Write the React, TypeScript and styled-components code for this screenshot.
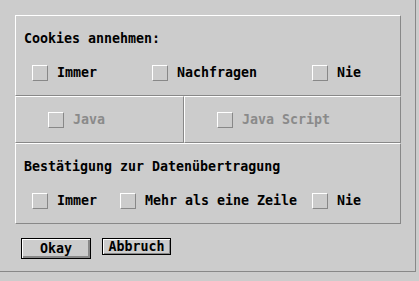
import React from "react";
import styled, { createGlobalStyle } from "styled-components";

const Global = createGlobalStyle`
  html, body { margin: 0; padding: 0; background: #cccccc; }
  body {
    font-family: "DejaVu Sans Mono", "Liberation Mono", monospace;
    font-weight: bold;
    font-size: 13.3px;
    line-height: 16px;
    color: #000;
  }
  * { box-sizing: border-box; }
`;

const Window = styled.div`
  width: 416px;
  height: 272px;
  border-right: 1px solid #888888;
  border-bottom: 1px solid #888888;
  padding: 15px 0 0 15px;
  display: flex;
  flex-direction: column;
`;

const Panel = styled.div`
  width: 386px;
  flex: none;
  display: flex;
  flex-direction: column;
`;

const Cell = styled.div<{ $h: number; $w?: number }>`
  height: ${(p) => p.$h}px;
  flex: none;
  ${(p) => (p.$w ? `width: ${p.$w}px;` : "")}
  border-top: 1px solid #ffffff;
  border-left: 1px solid #ffffff;
  border-right: 1px solid #888888;
  border-bottom: 1px solid #888888;
`;

const GroupCell = styled(Cell)`
  padding: 15px 0 0 8px;
  display: flex;
  flex-direction: column;
`;

const ToggleCell = styled(Cell)`
  display: flex;
  align-items: center;
  padding-left: 32px;
`;

const SplitRow = styled.div`
  display: flex;
  flex: none;
`;

const Title = styled.div`
  height: 16px;
  white-space: pre;
`;

const OptionRow = styled.div<{ $cols: string }>`
  margin-top: 18px;
  padding-left: 8px;
  display: grid;
  grid-template-columns: ${(p) => p.$cols};
  height: 16px;
`;

const Option = styled.label<{ $disabled?: boolean }>`
  display: flex;
  align-items: center;
  gap: 9px;
  white-space: pre;
  color: ${(p) => (p.$disabled ? "#8a8a8a" : "#000")};
`;

const Box = styled.span`
  width: 16px;
  height: 16px;
  flex: none;
  border-top: 1px solid #ffffff;
  border-left: 1px solid #ffffff;
  border-right: 1px solid #888888;
  border-bottom: 1px solid #888888;
`;

const ButtonRow = styled.div`
  margin-top: 14px;
  padding-left: 6px;
  display: flex;
  align-items: flex-start;
  gap: 11px;
`;

const Button = styled.button<{ $default?: boolean }>`
  font: inherit;
  color: #000;
  background: #cccccc;
  margin: 0;
  padding: 0;
  border: 1px solid #000;
  width: ${(p) => (p.$default ? 70 : 69)}px;
  height: ${(p) => (p.$default ? 21 : 17)}px;
  line-height: 14px;
  box-shadow: ${(p) =>
    p.$default
      ? "inset 1px 1px 0 #ffffff, inset -2px -2px 0 #888888"
      : "inset 1px 1px 0 #ffffff, inset -1px -1px 0 #888888"};
  ${(p) => (p.$default ? "padding-top: 1px;" : "")}
`;

const Check = ({ label, disabled }: { label: string; disabled?: boolean }) => (
  <Option $disabled={disabled}>
    <Box />
    {label}
  </Option>
);

export default function App() {
  return (
    <>
      <Global />
      <Window>
        <Panel>
          <GroupCell $h={81}>
            <Title>Cookies annehmen:</Title>
            <OptionRow $cols="120px 160px auto">
              <Check label="Immer" />
              <Check label="Nachfragen" />
              <Check label="Nie" />
            </OptionRow>
          </GroupCell>
          <SplitRow>
            <ToggleCell $h={47} $w={169}>
              <Check label="Java" disabled />
            </ToggleCell>
            <ToggleCell $h={47} $w={217}>
              <Check label="Java Script" disabled />
            </ToggleCell>
          </SplitRow>
          <GroupCell $h={81}>
            <Title>Bestätigung zur Datenübertragung</Title>
            <OptionRow $cols="88px 192px auto">
              <Check label="Immer" />
              <Check label="Mehr als eine Zeile" />
              <Check label="Nie" />
            </OptionRow>
          </GroupCell>
        </Panel>
        <ButtonRow>
          <Button $default>Okay</Button>
          <Button>Abbruch</Button>
        </ButtonRow>
      </Window>
    </>
  );
}
